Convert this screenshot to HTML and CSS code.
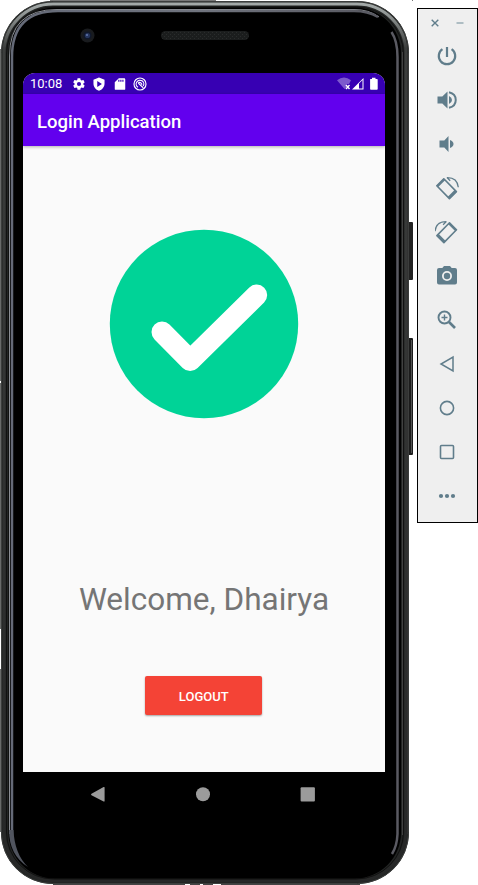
FILE: index.html
```
<!DOCTYPE html>
<html lang="en">
<head>
<meta charset="utf-8">
<title>Login Application</title>
<link rel="stylesheet" href="styles.css">
</head>
<body>
<div class="desktop">
  <div class="phone">
    <svg class="frame" width="415" height="885" viewBox="0 0 415 885" aria-hidden="true">
      <defs>
        <linearGradient id="rim" x1="0" y1="0" x2="0" y2="1">
          <stop offset="0" stop-color="#a3a9a8"/><stop offset=".014" stop-color="#8d9291"/><stop offset=".05" stop-color="#3c3e3d"/><stop offset="1" stop-color="#262727"/>
        </linearGradient>
        <linearGradient id="glass" gradientUnits="userSpaceOnUse" x1="0" y1="0" x2="400" y2="0">
          <stop offset="0" stop-color="#646977"/><stop offset=".5" stop-color="#70747e"/><stop offset="1" stop-color="#55555d"/>
        </linearGradient>
        <pattern id="mesh" width="4" height="4" patternUnits="userSpaceOnUse">
          <rect width="4" height="4" fill="#1b1d1d"/><path d="M0 0h1v1H0zM2 2h1v1H2z" fill="#2a2c2c"/>
        </pattern>
      </defs>
      <rect x="408" y="222" width="5" height="58" rx="1" fill="#222"/>
      <rect x="408" y="338" width="5" height="117" rx="1" fill="#1c1c1c"/>
      <path d="M411.5 340v113" stroke="#555"/>
      <path d="M.5 49v332M.5 383v246M.5 669v163" stroke="#686a69"/>
      <path d="M50 .5h166" stroke="#777"/>
      <path d="M53 884.5h132M190 884.5h10M203 884.5h10M221 884.5h139" stroke="#444"/>
      <path d="M412.500 0v1" stroke="#777"/>
      <rect x="1" y="1" width="408" height="883" rx="52" fill="#222423"/>
      <rect x="1.500" y="1.500" width="407" height="882" rx="51" fill="none" stroke="#3c3e3d"/>
      <rect x="4" y="4" width="402" height="876.500" rx="49" fill="none" stroke="url(#rim)" stroke-width="3"/>
      <rect x="6.500" y="7" width="397" height="872" rx="47" fill="none" stroke="#111"/>
      <rect x="8.500" y="7.500" width="392.500" height="871" rx="46" fill="#000"/>
      <path d="M9.500 834V56Q9.500 9.500 57 9.500H354Q369 9.500 379 17" fill="none" stroke="#8b8e94"/>
      <path d="M12 836V57Q12 11 58 11H354Q368 11 378 17" fill="none" stroke="url(#glass)" stroke-width="2.500"/>
      <path d="M9 830h4.500q1 24 14.500 37Q9 855 9 830z" fill="#50545e"/>
      <path d="M391.500 32Q397.500 41 397.500 57V834Q397 846 392 854" fill="none" stroke="#5a5a62" stroke-width="2.500"/>
      <path d="M402.500 52V835" stroke="#414141"/>
      <path d="M407.500 54V834" stroke="#323232"/>
      <circle cx="87.500" cy="35.500" r="7" fill="#191b1e"/>
      <circle cx="87.500" cy="35.500" r="4" fill="#10182b"/>
      <circle cx="87.500" cy="35.500" r="2.600" fill="#26365e"/>
      <circle cx="87" cy="35" r="1" fill="#6277ae"/>
      <rect x="161" y="31" width="88" height="9" rx="4.500" fill="url(#mesh)"/>
    </svg>
    <main class="screen">
      <div class="status">
        <span class="clock">10:08</span>
        <svg class="si" viewBox="0 0 24 24"><path d="M19.400 13a7.500 7.500 0 0 0 0-2l2.100-1.600a.5.5 0 0 0 .1-.6l-2-3.500a.5.5 0 0 0-.6-.2l-2.500 1a7.300 7.300 0 0 0-1.700-1l-.4-2.600a.5.5 0 0 0-.5-.5h-4a.5.5 0 0 0-.5.5L9 5.100a7.700 7.700 0 0 0-1.700 1l-2.500-1a.5.5 0 0 0-.6.200l-2 3.500a.5.5 0 0 0 .1.600L4.500 11a8 8 0 0 0 0 2l-2.200 1.600a.5.5 0 0 0-.1.600l2 3.500c.1.200.4.300.6.200l2.500-1a7.300 7.300 0 0 0 1.700 1l.4 2.600c0 .3.200.5.500.5h4c.2 0 .5-.2.500-.5l.4-2.600a7.700 7.700 0 0 0 1.700-1l2.500 1c.2.100.5 0 .6-.2l2-3.500a.5.5 0 0 0-.1-.6zM12 15.500a3.500 3.500 0 1 1 0-7 3.500 3.500 0 0 1 0 7z"/></svg>
        <svg class="si" viewBox="0 0 24 24"><path fill-rule="evenodd" d="M12 1 2.500 4.500V11c0 6 4 10.500 9.500 12.500 5.500-2 9.500-6.500 9.500-12.500V4.500zM9 7l8 5-8 5z"/></svg>
        <svg class="si" viewBox="0 0 24 24"><path fill-rule="evenodd" d="M19 2h-9L3 9v11.500c0 1 .9 1.500 2 1.500h14c1.100 0 2-.5 2-1.500V4c0-1.100-.9-2-2-2zM9 8h2V4.500H9zm3.500 0h2V4.500h-2zm3.500 0h2V4.500h-2z"/></svg>
        <svg class="si ring" viewBox="0 0 24 24"><circle cx="12" cy="12" r="10.300"/><path d="M8.500 17.500a6.500 6.500 0 1 1 9-2M9 10.500l8.500 8M9 10.500a3.500 3.500 0 0 1 6 3"/></svg>
        <span class="grow"></span>
        <svg class="signals" width="42" height="14" viewBox="0 0 42 14"><path d="M0 3.200Q7-2 14 3.200L12 7H9.500v3.500L7.500 12z" opacity=".35"/><path d="m9 8 3.500 4m0-4L9 12" stroke="#fff" stroke-width="1.400"/><path d="M15 12.500 26.500 1v11.500zm7-6v5h3.500V3z" fill-rule="evenodd"/><path d="M33.500 2H35V.700h3.500V2H40q.7 0 .7.700v9.300q0 .8-.8.800h-6q-.8 0-.8-.8V2.700q0-.7.400-.7z"/></svg>
      </div>
      <header class="appbar">Login Application</header>
      <section class="content">
        <svg class="check" width="190" height="190" viewBox="0 0 190 190"><circle cx="95" cy="95" r="94.200" fill="#00d397"/><path d="m53 103 28.200 28.500 66.500-65.500" fill="none" stroke="#fff" stroke-width="21" stroke-linecap="round" stroke-linejoin="round"/></svg>
        <h1 class="welcome">Welcome, Dhairya</h1>
        <button class="logout">LOGOUT</button>
      </section>
    </main>
    <nav class="navbar">
      <svg width="16" height="16" viewBox="0 0 16 16"><path d="M1.500 7.800 13.600 1q1-.4 1 .5v13.500q0 .9-1 .4L1.500 9.200q-1-.7 0-1.400z"/></svg>
      <svg width="16" height="16" viewBox="0 0 16 16"><circle cx="8" cy="8.300" r="7"/></svg>
      <svg width="16" height="16" viewBox="0 0 16 16"><rect x=".6" y="1.300" width="14.300" height="14.300" rx="1"/></svg>
    </nav>
  </div>
  <aside class="tools">
    <div class="window">
      <svg width="10" height="10" viewBox="0 0 10 10"><path d="m1.700 1.700 6.600 6.600m0-6.600L1.700 8.300" stroke="#607d8b" stroke-width="1.400"/></svg>
      <svg width="10" height="10" viewBox="0 0 10 10"><path d="M1.500 5h7" stroke="#9eb0b8" stroke-width="1.600"/></svg>
    </div>
    <svg class="tool line" viewBox="0 0 24 24"><path d="M12 3v10M7.400 5.200a8.200 8.200 0 1 0 9.200 0" stroke-width="2.200"/></svg>
    <svg class="tool" viewBox="0 0 24 24"><path d="M2.500 8.500v7h4.800l5.200 5V3.500l-5.200 5zM14 8v8q3-1.300 3-4t-3-4z"/><path d="M14 4.200c9 2 9 13.600 0 15.600" fill="none" stroke="#607d8b" stroke-width="2"/></svg>
    <svg class="tool" viewBox="0 0 24 24"><path d="M4.500 8.500v7h4.800l4.200 4.500V4L9.300 8.500zM15 8v8q3.500-1.300 3.500-4T15 8z"/></svg>
    <svg class="tool line" viewBox="0 0 24 24"><path d="M1.800 9.800 8.800 2.800 21.400 15.600 14.400 22.600z" stroke-width="1.600" stroke-linejoin="round"/><path d="m1.500 9.800 7.300-7.300 1.500 1.500L3 11.300zM12.600 21l7.200-7.200 2 2-7.300 7.300z" fill="#607d8b" stroke="none"/><path d="M11.800 1.600q10.500-.3 11.500 9.700M12 1.600l3.200 3.200" stroke-width="1.300"/></svg>
    <svg class="tool line" viewBox="0 0 24 24"><g transform="matrix(-1 0 0 1 23.300 0)"><path d="M1.800 9.800 8.800 2.800 21.400 15.600 14.400 22.600z" stroke-width="1.600" stroke-linejoin="round"/><path d="m1.500 9.800 7.300-7.300 1.500 1.500L3 11.300zM12.600 21l7.200-7.200 2 2-7.300 7.300z" fill="#607d8b" stroke="none"/><path d="M11.800 1.600q10.500-.3 11.500 9.700M12 1.600l3.200 3.200" stroke-width="1.300"/></g></svg>
    <svg class="tool" viewBox="0 0 24 24"><path fill-rule="evenodd" d="M9 2 7.300 4H4q-2 0-2 2v12.500q0 2 2 2h16q2 0 2-2V6q0-2-2-2h-3.300L15 2zM12 7a5 5 0 1 1 0 10 5 5 0 0 1 0-10z"/><circle cx="12" cy="12" r="3.200"/></svg>
    <svg class="tool line" viewBox="0 0 24 24"><circle cx="9.500" cy="9.500" r="6" stroke-width="1.900"/><path d="M9.500 6.500v6m-3-3h6" stroke-width="1.400"/><path d="m14 14 6 6" stroke-width="2.600"/></svg>
    <svg class="tool line" viewBox="0 0 24 24"><path d="M18 5v14L6 12z" stroke-width="1.500"/></svg>
    <svg class="tool line" viewBox="0 0 24 24"><circle cx="12" cy="12" r="6.600" stroke-width="1.600"/></svg>
    <svg class="tool line" viewBox="0 0 24 24"><rect x="5.500" y="5.500" width="13" height="13" rx="1" stroke-width="1.600"/></svg>
    <svg class="tool" viewBox="0 0 24 24"><circle cx="6" cy="12" r="2.100"/><circle cx="12" cy="12" r="2.100"/><circle cx="18" cy="12" r="2.100"/></svg>
  </aside>
</div>
</body>
</html>
```

FILE: styles.css
```
* { box-sizing: border-box; }
body { margin: 0; background: #fff; font-family: Roboto, "Liberation Sans", sans-serif; overflow: hidden; }
.desktop { display: flex; align-items: flex-start; width: 478px; height: 885px; }
.phone { position: relative; width: 417px; height: 885px; padding: 73px 32px 0 23px; flex: none; }
.frame { position: absolute; left: 0; top: 0; }
.screen { position: relative; display: flex; flex-direction: column; height: 699px; background: #fafafa; border-radius: 12px 12px 0 0; overflow: hidden; }
.status { display: flex; align-items: center; height: 21px; background: #3700b3; color: #fff; padding: 0 6px 0 7px; flex: none; }
.clock { font-size: 13px; line-height: 21px; width: 42px; }
.si { width: 14px; height: 14px; margin-right: 6.400px; fill: #fff; flex: none; }
.ring { fill: none; stroke: #fff; stroke-width: 2; }
.grow { flex: 1; }
.signals { fill: #fff; }
.appbar { height: 52px; flex: none; background: #6200ee; color: #fff; font-size: 18.500px; font-weight: 500; line-height: 56px; padding-left: 14px; box-shadow: 0 1px 3px rgba(0, 0, 0, .3); }
.content { display: flex; flex-direction: column; align-items: center; padding-top: 83px; }
.check { display: block; }
.welcome { margin: 161px 0 0; font-size: 31.500px; font-weight: 400; line-height: 40px; color: #757575; white-space: nowrap; }
.logout { margin: 55.500px .5px 0 0; width: 117px; height: 39.500px; padding: 2px 0 0; border: 0; border-radius: 2px; background: #f44336; color: #fff; font: 500 13px/37.500px Roboto, sans-serif; box-shadow: 0 1px 2px rgba(0, 0, 0, .35); }
.navbar { position: relative; display: flex; justify-content: space-between; width: 226px; margin: 14px 0 0 67px; fill: #9b9b9b; }
.tools { display: flex; flex-direction: column; align-items: center; gap: 20px; width: 61px; height: 515px; margin-top: 8px; padding-right: 1px; border: 1px solid #000; background: #efefef; flex: none; }
.window { display: flex; gap: 15px; height: 10px; margin: 9px 0 -4px; }
.tool { width: 24px; height: 24px; fill: #607d8b; flex: none; }
.line { fill: none; stroke: #607d8b; }
```
